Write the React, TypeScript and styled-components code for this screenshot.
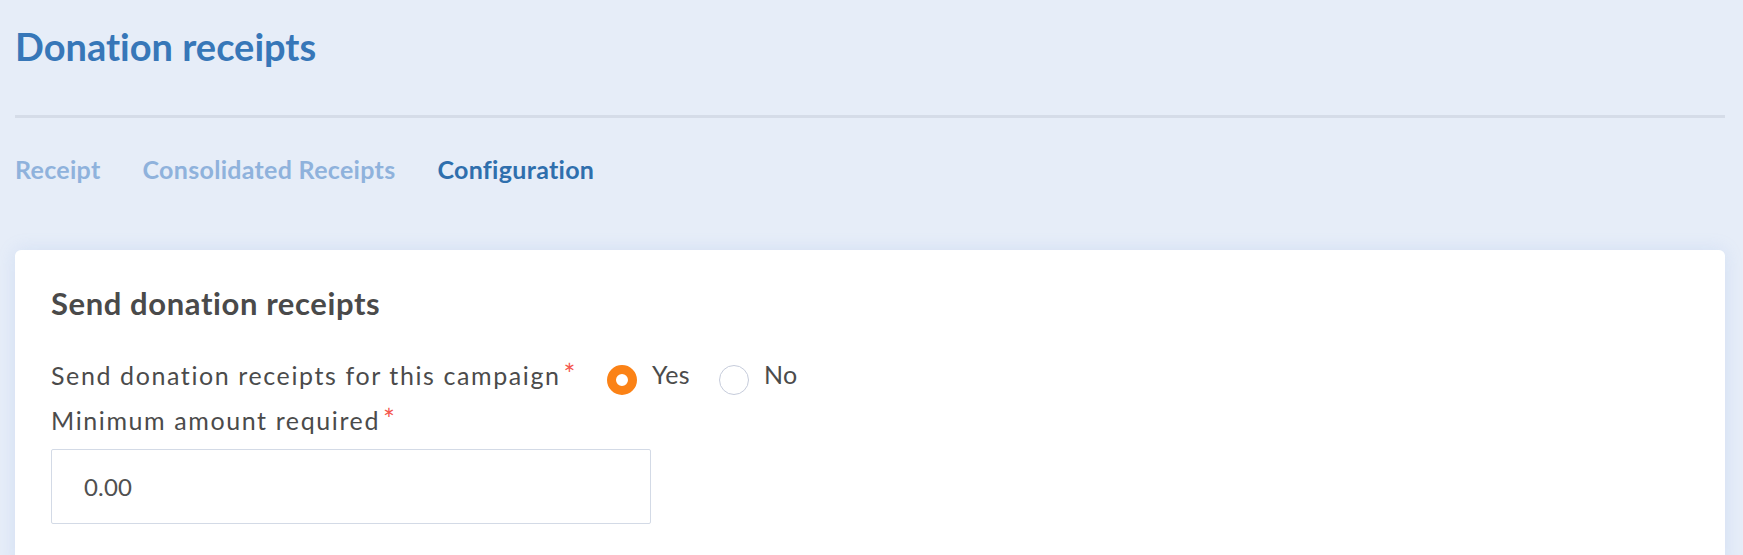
import React from "react";
import styled, { createGlobalStyle } from "styled-components";

const GlobalStyle = createGlobalStyle`
  html, body {
    margin: 0;
    padding: 0;
    background: #e6edf8;
    font-family: "Lato", "Open Sans", sans-serif;
    font-variant-ligatures: none;
  }
  * { box-sizing: border-box; }
`;

const Page = styled.div`
  padding: 24px 18px 0 15px;
  min-height: 555px;
  background: #e6edf8;
`;

const Title = styled.h1`
  margin: 0 0 45px 0;
  font-size: 38px;
  line-height: 1.2;
  font-weight: 700;
  color: #3777b8;
  letter-spacing: 0;
  font-variant-ligatures: none;
`;

const Divider = styled.hr`
  margin: 0;
  border: none;
  height: 3px;
  background: #d5dce8;
`;

const Tabs = styled.nav`
  display: flex;
  gap: 42px;
  margin-top: 36px;
  margin-bottom: 66px;
`;

const Tab = styled.a<{ $active?: boolean }>`
  font-size: 25px;
  line-height: 1.2;
  font-weight: 700;
  color: ${(p) => (p.$active ? "#2f6fad" : "#8fb2dc")};
  text-decoration: none;
  cursor: pointer;
  letter-spacing: 0.3px;
`;

const Card = styled.section`
  background: #ffffff;
  border-radius: 6px;
  padding: 35px 36px 30px;
  box-shadow: 0 0 18px rgba(120, 160, 230, 0.18);
  min-height: 320px;
`;

const SectionTitle = styled.h2`
  margin: 0 0 38px 0;
  font-size: 31px;
  line-height: 1.2;
  font-weight: 700;
  color: #4a4a4a;
  letter-spacing: 0.6px;
`;

const FieldRow = styled.div`
  display: flex;
  align-items: flex-start;
  margin-bottom: 10px;
`;

const Label = styled.label`
  font-size: 25px;
  line-height: 1.2;
  font-weight: 400;
  color: #4b4b4b;
  letter-spacing: 1.6px;
  white-space: nowrap;
`;

const Required = styled.span`
  color: #f4564c;
  font-size: 28px;
  line-height: 1;
  margin-left: 3px;
  position: relative;
  top: 0px;
`;

const RadioGroup = styled.div`
  display: flex;
  align-items: flex-start;
  margin-left: 30px;
  gap: 29px;
`;

const RadioOption = styled.label`
  display: flex;
  align-items: flex-start;
  gap: 15px;
  cursor: pointer;
`;

const RadioCircle = styled.span<{ $checked?: boolean }>`
  width: 30px;
  height: 30px;
  margin-top: 5px;
  border-radius: 50%;
  flex: none;
  background: #ffffff;
  border: ${(p) => (p.$checked ? "9px solid #fb8216" : "1px solid #c6ccdb")};
`;

const RadioText = styled.span`
  font-size: 25px;
  line-height: 1.2;
  color: #4b4b4b;
  letter-spacing: 0.3px;
  margin-top: -1px;
`;

const LabelBlock = styled.div`
  margin-bottom: 14px;
`;

const Input = styled.input`
  display: block;
  width: 600px;
  height: 75px;
  border: 1px solid #d3dae6;
  border-radius: 2px;
  padding: 0 0 0 32px;
  font-family: "Lato", "Open Sans", sans-serif;
  font-size: 24px;
  color: #505050;
  background: #ffffff;
  outline: none;
  letter-spacing: 0.2px;
`;

export default function App() {
  return (
    <>
      <GlobalStyle />
      <Page>
        <Title>Donation receipts</Title>
        <Divider />
        <Tabs>
          <Tab>Receipt</Tab>
          <Tab>Consolidated Receipts</Tab>
          <Tab $active>Configuration</Tab>
        </Tabs>
        <Card>
          <SectionTitle>Send donation receipts</SectionTitle>
          <FieldRow>
            <Label>
              Send donation receipts for this campaign
              <Required>*</Required>
            </Label>
            <RadioGroup>
              <RadioOption>
                <RadioCircle $checked />
                <RadioText>Yes</RadioText>
              </RadioOption>
              <RadioOption>
                <RadioCircle />
                <RadioText>No</RadioText>
              </RadioOption>
            </RadioGroup>
          </FieldRow>
          <LabelBlock>
            <Label>
              Minimum amount required
              <Required>*</Required>
            </Label>
          </LabelBlock>
          <Input defaultValue="0.00" readOnly />
        </Card>
      </Page>
    </>
  );
}
